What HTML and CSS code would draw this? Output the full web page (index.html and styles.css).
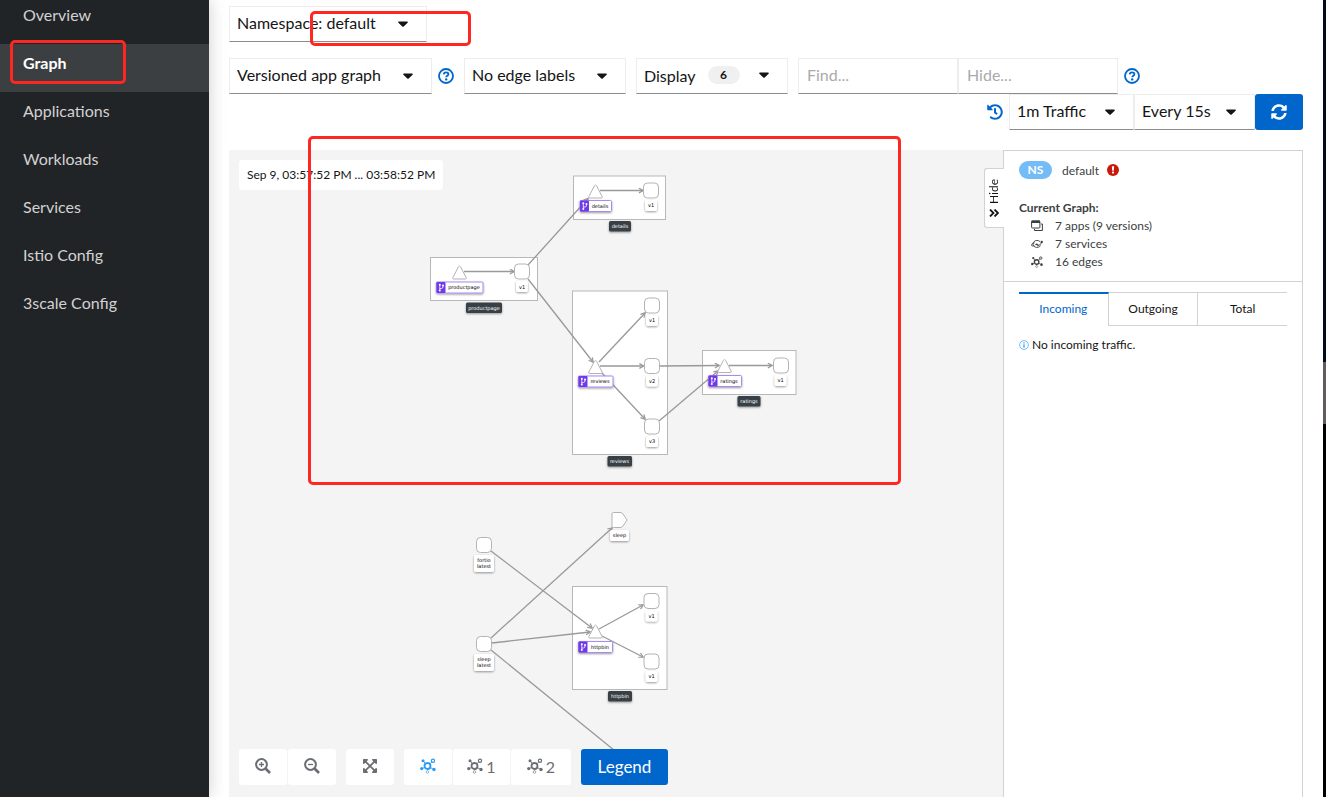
FILE: index.html
```html
<!DOCTYPE html>
<html lang="en">
  <head>
    <meta charset="UTF-8" />
    <meta name="viewport" content="width=device-width, initial-scale=1.0" />
    <link rel="stylesheet" href="styles.css" />
    <title>Kiali - Graph</title>
  </head>
  <body>
    <!-- shared icons -->
    <svg class="defs" width="0" height="0" aria-hidden="true">
      <symbol id="caret" viewBox="0 0 10 6">
        <path d="M1 .4h8c.8 0 1.2.9.6 1.4L5.7 5.500a1 1 0 0 1-1.400 0L.4 1.800C-.2 1.300 .2 .4 1 .4z" fill="currentColor" />
      </symbol>
      <symbol id="help" viewBox="0 0 16 16">
        <circle cx="8" cy="8" r="7" fill="none" stroke="currentColor" stroke-width="1.8" />
        <path d="M5.7 6.3c.2-1.4 1.1-2 2.3-2 1.4 0 2.4.8 2.4 1.9 0 1.5-2.2 1.5-2.2 3" fill="none" stroke="currentColor" stroke-width="1.8" />
        <circle cx="8.2" cy="11.4" r="1.2" fill="currentColor" />
      </symbol>
      <symbol id="topology" viewBox="0 0 16 16">
        <g fill="none" stroke="currentColor">
          <circle cx="7.5" cy="8" r="3" stroke-width="1.8" />
          <circle cx="13" cy="2.8" r="1.6" stroke-width="1.2" />
          <path d="M10 5.8l1.9-1.9M5.3 5.5L3.3 3M4.7 9.500l-2 .8M10.2 9.600l2.600 1.200" stroke-width="0.9" />
          <path d="M7.5 11v1.5" stroke-width="1" opacity="0.6" />
          <circle cx="7.5" cy="14" r="1.3" stroke-width="1" opacity="0.6" />
        </g>
        <circle cx="3" cy="2.7" r="1.5" fill="currentColor" />
        <circle cx="1.7" cy="10.6" r="1.6" fill="currentColor" />
        <circle cx="14" cy="11.5" r="1.7" fill="currentColor" />
      </symbol>
    </svg>

    <nav class="sidebar">
      <ul>
        <li><a href="#overview">Overview</a></li>
        <li><a href="#graph" class="current">Graph</a></li>
        <li><a href="#applications">Applications</a></li>
        <li><a href="#workloads">Workloads</a></li>
        <li><a href="#services">Services</a></li>
        <li><a href="#istio">Istio Config</a></li>
        <li><a href="#3scale">3scale Config</a></li>
      </ul>
    </nav>

    <main>
      <div class="toolbar">
        <div class="row">
          <div class="dropdown dropdown-ns">
            <select aria-label="Namespace">
              <option>Namespace: default</option>
            </select>
            <svg class="caret"><use href="#caret" /></svg>
          </div>
        </div>
        <div class="row row-filters">
          <div class="dropdown dropdown-type">
            <select aria-label="Graph type">
              <option>Versioned app graph</option>
            </select>
            <svg class="caret"><use href="#caret" /></svg>
          </div>
          <button class="help" aria-label="Graph type help"><svg><use href="#help" /></svg></button>
          <div class="dropdown dropdown-labels">
            <select aria-label="Edge labels">
              <option>No edge labels</option>
            </select>
            <svg class="caret"><use href="#caret" /></svg>
          </div>
          <button class="display">
            Display <span class="count">6</span>
            <svg class="caret"><use href="#caret" /></svg>
          </button>
          <div class="find">
            <input type="text" placeholder="Find..." aria-label="Find" />
            <input type="text" placeholder="Hide..." aria-label="Hide" />
          </div>
          <button class="help" aria-label="Find help"><svg><use href="#help" /></svg></button>
        </div>
        <div class="row row-refresh">
          <button class="help history" aria-label="Replay">
            <svg viewBox="0 0 512 512"><path fill="currentColor" d="M504 255.531c.253 136.640-111.180 248.372-247.820 248.468-59.015.042-113.223-20.530-155.822-54.911-11.077-8.940-11.905-25.541-1.839-35.607l11.267-11.267c8.609-8.609 22.353-9.551 31.891-1.984C173.062 425.135 212.781 440 256 440c101.705 0 184-82.311 184-184 0-101.705-82.311-184-184-184-48.814 0-93.149 18.969-126.068 49.932l50.754 50.754c10.080 10.080 2.941 27.314-11.313 27.314H24c-8.837 0-16-7.163-16-16V38.627c0-14.254 17.234-21.393 27.314-11.314l49.372 49.372C129.209 34.136 189.552 8 256 8c136.810 0 247.747 110.780 248 247.531zm-180.912 78.784l9.823-12.630c8.138-10.463 6.253-25.542-4.210-33.679L288 256.349V152c0-13.255-10.745-24-24-24h-16c-13.255 0-24 10.745-24 24v135.651l65.409 50.874c10.463 8.137 25.541 6.253 33.679-4.210z" /></svg>
          </button>
          <div class="dropdown dropdown-traffic">
            <select aria-label="Traffic duration">
              <option>1m Traffic</option>
            </select>
            <svg class="caret"><use href="#caret" /></svg>
          </div>
          <div class="dropdown dropdown-every">
            <select aria-label="Refresh interval">
              <option>Every 15s</option>
            </select>
            <svg class="caret"><use href="#caret" /></svg>
          </div>
          <button class="refresh" aria-label="Refresh">
            <svg viewBox="0 0 512 512"><path fill="currentColor" d="M370.720 133.280C339.458 104.008 298.888 87.962 255.848 88c-77.458.068-144.328 53.178-162.791 126.850-1.344 5.363-6.122 9.150-11.651 9.150H24.103c-7.498 0-13.194-6.807-11.807-14.176C33.933 94.924 134.813 8 256 8c66.448 0 126.791 26.136 171.315 68.685L463.030 40.970C478.149 25.851 504 36.559 504 57.941V192c0 13.255-10.745 24-24 24H345.941c-21.382 0-32.090-25.851-16.971-40.971l41.750-41.749zM32 296h134.059c21.382 0 32.090 25.851 16.971 40.971l-41.750 41.750c31.262 29.273 71.835 45.319 114.876 45.280 77.418-.070 144.315-53.144 162.787-126.849 1.344-5.363 6.122-9.150 11.651-9.150h57.304c7.498 0 13.194 6.807 11.807 14.176C478.067 417.076 377.187 504 256 504c-66.448 0-126.791-26.136-171.315-68.685L48.970 471.030C33.851 486.149 8 475.441 8 454.059V320c0-13.255 10.745-24 24-24z" /></svg>
          </button>
        </div>
      </div>

      <div class="graph">
        <section class="canvas">
          <svg class="nodes" role="img" aria-label="Service graph">
            <defs>
              <marker id="arrow" viewBox="0 0 8 8" refX="6.5" refY="4" markerWidth="6" markerHeight="6" markerUnits="userSpaceOnUse" orient="auto">
                <path d="M1 0.8L7 4L1 7.2" fill="none" stroke="#999" stroke-width="1.6" />
              </marker>
              <filter id="shadow" x="-20%" y="-20%" width="140%" height="170%">
                <feDropShadow dx="0" dy="1" stdDeviation="1" flood-opacity="0.4" />
              </filter>
              <rect id="app" x="-7.5" y="-7.5" width="15" height="15" rx="4" />
              <path id="svc" d="M-1.2 -6Q0 -8 1.2 -6L6.6 4.5Q7.2 6 6 6H-6Q-7.2 6 -6.6 4.5z" />
              <g id="fork">
                <rect width="9" height="11" rx="1" fill="#703be7" />
                <path d="M3.3 3v5M3.3 6.5h1.7q1.5 0 1.5-2V4" fill="none" stroke="#fff" stroke-width="0.8" />
                <circle cx="3.3" cy="2.8" r="1" fill="#fff" />
                <circle cx="3.3" cy="8.4" r="1" fill="#fff" />
                <circle cx="6.5" cy="3.6" r="1" fill="#fff" />
              </g>
            </defs>
            <g transform="translate(-229 -151)">
              <!-- app boxes -->
              <g class="box">
                <rect x="573.5" y="176" width="92" height="43.5" />
                <rect x="430.5" y="257.5" width="107" height="43" />
                <rect x="572.5" y="291" width="95" height="163.5" />
                <rect x="702.5" y="350.5" width="93.5" height="44" />
                <rect x="572.5" y="586.5" width="94.5" height="103" />
              </g>

              <g class="edge">
                <path d="M464 271.5H514" />
                <path d="M528 265L588 198.5" />
                <path d="M528 279L593 362" />
                <path d="M600 190.5H643" />
                <path d="M599 362L645 313" />
                <path d="M600 366H643.5" />
                <path d="M601 372L645 419" />
                <path d="M660 366L719 365.5" />
                <path d="M659 421L718 371" />
                <path d="M729 365.5H772" />
                <path d="M491 551L592 628" />
                <path d="M491 638L612 528" />
                <path d="M492 643L590 632" />
                <path d="M599 629L643 605" />
                <path d="M600 635L643 657" />
                <path d="M491 650L620 755" />
              </g>

              <g class="node">
                <use href="#svc" x="459.5" y="273" />
                <use href="#app" x="522" y="271.5" />
                <use href="#svc" x="595.5" y="192" />
                <use href="#app" x="651" y="190.5" />
                <use href="#svc" x="595.5" y="367.5" />
                <use href="#app" x="652" y="305.5" />
                <use href="#app" x="652" y="366" />
                <use href="#app" x="652" y="426.5" />
                <use href="#svc" x="724.5" y="366.5" />
                <use href="#app" x="781" y="365.5" />
                <use href="#app" x="484" y="545" />
                <use href="#app" x="484" y="644" />
                <path d="M613.5 512.5H620Q622 512.5 623 514L627 520L623 526Q622 527.5 620 527.5H613.5Q612 527.5 612 526V514Q612 512.5 613.5 512.5z" />
                <use href="#svc" x="595.5" y="632" />
                <use href="#app" x="651.5" y="601" />
                <use href="#app" x="651.5" y="661.5" />
              </g>

              <g class="tag">
                <rect x="516" y="281" width="12" height="11" rx="2" /><text x="522" y="288.5">v1</text>
                <rect x="645" y="200" width="12" height="11" rx="2" /><text x="651" y="207">v1</text>
                <rect x="646" y="315" width="12" height="11" rx="2" /><text x="652" y="322">v1</text>
                <rect x="646" y="375.5" width="12" height="11" rx="2" /><text x="652" y="382.5">v2</text>
                <rect x="646" y="436" width="12" height="11" rx="2" /><text x="652" y="443">v3</text>
                <rect x="774.5" y="375" width="12" height="11" rx="2" /><text x="780.5" y="382">v1</text>
                <rect x="645.5" y="610.5" width="12" height="11" rx="2" /><text x="651.5" y="617.5">v1</text>
                <rect x="645.5" y="671" width="12" height="11" rx="2" /><text x="651.5" y="678">v1</text>
                <rect x="610" y="530" width="19" height="11" rx="2" /><text x="619.5" y="537">sleep</text>
                <rect x="474" y="555" width="20" height="17" rx="2" /><text x="484" y="561.5">fortio</text><text x="484" y="567.5">latest</text>
                <rect x="474" y="654" width="20" height="17" rx="2" /><text x="484" y="660.5">sleep</text><text x="484" y="666.5">latest</text>
              </g>

              <g class="service">
                <rect x="436.5" y="282" width="46.5" height="11" rx="1" /><use href="#fork" x="436.5" y="282" /><text x="464" y="289">productpage</text>
                <rect x="580" y="200.5" width="31.5" height="11" rx="1" /><use href="#fork" x="580" y="200.5" /><text x="600" y="207.5">details</text>
                <rect x="578.5" y="376" width="34.5" height="11" rx="1" /><use href="#fork" x="578.5" y="376" /><text x="600" y="383">reviews</text>
                <rect x="708.5" y="375.5" width="33" height="11" rx="1" /><use href="#fork" x="708.5" y="375.5" /><text x="729" y="382.5">ratings</text>
                <rect x="578.5" y="641.5" width="34" height="11" rx="1" /><use href="#fork" x="578.5" y="641.5" /><text x="600" y="648.5">httpbin</text>
              </g>

              <g class="app-name">
                <rect x="466" y="302.5" width="36" height="10.5" rx="1.5" /><text x="484" y="309.5">productpage</text>
                <rect x="609" y="221" width="22" height="10.5" rx="1.5" /><text x="620" y="228">details</text>
                <rect x="607.5" y="456" width="24.5" height="10.5" rx="1.5" /><text x="619.5" y="463">reviews</text>
                <rect x="737.5" y="396" width="23" height="10.5" rx="1.5" /><text x="749" y="403">ratings</text>
                <rect x="608" y="691" width="24" height="10.5" rx="1.5" /><text x="620" y="697.5">httpbin</text>
              </g>
            </g>
          </svg>

          <div class="time-range">Sep 9, 03:57:52 PM ... 03:58:52 PM</div>

          <div class="canvas-tools">
            <div class="group">
              <button aria-label="Zoom in">
                <svg viewBox="0 0 16 16"><g fill="none" stroke="currentColor"><circle cx="6.5" cy="6.5" r="5.4" stroke-width="2" /><path d="M10.5 10.5L15 15" stroke-width="2.6" /><path d="M6.5 4v5M4 6.5h5" stroke-width="1.3" /></g></svg>
              </button>
              <button aria-label="Zoom out">
                <svg viewBox="0 0 16 16"><g fill="none" stroke="currentColor"><circle cx="6.5" cy="6.5" r="5.4" stroke-width="2" /><path d="M10.5 10.5L15 15" stroke-width="2.6" /><path d="M4 6.5h5" stroke-width="1.3" /></g></svg>
              </button>
            </div>
            <button aria-label="Fit to view">
              <svg viewBox="0 0 448 512"><path fill="currentColor" d="M448 344v112a23.940 23.940 0 0 1-24 24H312c-21.390 0-32.090-25.900-17-41l36.200-36.200L224 295.600 116.770 402.900 153 439c15.090 15.100 4.390 41-17 41H24a23.940 23.940 0 0 1-24-24V344c0-21.400 25.890-32.100 41-17l36.190 36.200L184.460 256 77.180 148.700 41 185c-15.100 15.100-41 4.400-41-17V56a23.940 23.940 0 0 1 24-24h112c21.390 0 32.090 25.900 17 41l-36.200 36.200L224 216.400l107.230-107.300L295 73c-15.090-15.100-4.390-41 17-41h112a23.940 23.940 0 0 1 24 24v112c0 21.400-25.890 32.100-41 17l-36.190-36.200L263.540 256l107.280 107.300L407 327.100c15.100-15.200 41-4.500 41 16.900z" /></svg>
            </button>
            <div class="group">
              <button class="active" aria-label="Default layout"><svg><use href="#topology" /></svg></button>
              <button class="layout-1"><svg><use href="#topology" /></svg>1</button>
              <button class="layout-2"><svg><use href="#topology" /></svg>2</button>
            </div>
            <button class="legend">Legend</button>
          </div>
        </section>

        <aside class="summary">
          <button class="hide-tab">
            <span>Hide</span>
            <svg viewBox="0 0 10 8"><path d="M1 .5L4.5 4L1 7.5M5.5 .5L9 4L5.5 7.5" fill="none" stroke="currentColor" stroke-width="1.8" /></svg>
          </button>
          <div class="summary-head">
            <div class="ns">
              <span class="ns-badge">NS</span>
              <span>default</span>
              <svg viewBox="0 0 12 12"><circle cx="6" cy="6" r="6" fill="#c9190b" /><path d="M4.9 2.3h2.2l-.3 4.4H5.2z" fill="#fff" /><circle cx="6" cy="8.6" r="1.1" fill="#fff" /></svg>
            </div>
            <h2>Current Graph:</h2>
            <ul>
              <li>
                <svg viewBox="0 0 12 12"><g fill="none" stroke="currentColor"><rect x="0.6" y="1" width="8.3" height="7" rx="0.8" /><path d="M10 4h1.4v6.5H3.5V9" /></g><path d="M.5 .5h8.5v2.5H.5z" fill="currentColor" /></svg>
                7 apps (9 versions)
              </li>
              <li>
                <svg viewBox="0 0 12 12"><g fill="none" stroke="currentColor" stroke-width="0.9"><path d="M9 3.6A4 3.5 0 1 0 9.6 7.5" /><path d="M3.6 8q-3.200 .4-3.200-.9Q.5 5.600 3.600 4.700M6 8q3.500-.5 4.600-3.400M4.300 6.500h3" /></g><circle cx="10.700" cy="4" r="1.200" fill="currentColor" /><circle cx="5.700" cy="6.300" r="0.900" fill="currentColor" /></svg>
                7 services
              </li>
              <li>
                <svg><use href="#topology" /></svg>
                16 edges
              </li>
            </ul>
          </div>
          <div class="tabs" role="tablist">
            <button role="tab" class="selected" aria-selected="true">Incoming</button>
            <button role="tab">Outgoing</button>
            <button role="tab">Total</button>
          </div>
          <p class="no-traffic">
            <svg viewBox="0 0 10 10"><circle cx="5" cy="5" r="4.4" fill="none" stroke="#73bcf7" stroke-width="1" /><path d="M5 4.2v3.5M5 2.3v1.2" stroke="#2b9af3" stroke-width="1.2" /></svg>
            No incoming traffic.
          </p>
        </aside>
      </div>
    </main>

    <div class="edge-strip"></div>

    <!-- highlights -->
    <div class="mark mark-nav"></div>
    <div class="mark mark-namespace"></div>
    <div class="mark mark-bookinfo"></div>
  </body>
</html>
```
FILE: styles.css
```css
* {
  margin: 0;
  padding: 0;
  box-sizing: border-box;
}

body {
  position: relative;
  display: flex;
  height: 100vh;
  overflow: hidden;
  background: #fff;
  color: #151515;
  font-family: Lato, sans-serif;
  font-size: 16px;
}

button,
input,
select {
  border: none;
  background: none;
  color: inherit;
  font: inherit;
}

ul {
  list-style: none;
}

.defs {
  position: absolute;
}

/* Sidebar */
.sidebar {
  flex: none;
  width: 209px;
  background: #212427;
  box-shadow: 0 0 16px rgba(0, 0, 0, 0.2);
}
.sidebar ul {
  margin-top: -4px;
}
.sidebar a {
  display: block;
  height: 48px;
  padding: 7px 23px;
  color: #d2d2d2;
  line-height: 24px;
  text-decoration: none;
}
.sidebar .current {
  background: #3c3f42;
  color: #fff;
  font-weight: 700;
}

main {
  flex: 1;
  min-width: 0;
  display: flex;
  flex-direction: column;
  padding: 6px 20px 0;
}

/* Toolbar */
.row {
  display: flex;
  align-items: center;
}
.row-filters {
  margin-top: 16px;
}
.row-refresh {
  justify-content: flex-end;
}

.dropdown {
  display: grid;
  align-items: center;
  height: 36px;
}
.dropdown select {
  grid-area: 1 / 1;
  width: 100%;
  height: 36px;
  padding: 0 7px 3px;
  appearance: none;
}
.dropdown .caret {
  grid-area: 1 / 1;
  justify-self: end;
  margin-right: 19px;
  pointer-events: none;
}
.caret {
  width: 10px;
  height: 6px;
}
.dropdown select,
.display,
.find input {
  border: 1px solid #ededed;
  border-bottom-color: #8a8d90;
}
.dropdown-ns {
  width: 198px;
}
.dropdown-type {
  width: 203px;
}
.dropdown-labels {
  width: 162px;
  margin-right: 10px;
}
.dropdown-traffic {
  width: 125px;
}
.dropdown-every {
  width: 121px;
}

.help {
  display: flex;
  padding: 0 10px 0 6px;
  color: #06c;
}
.history {
  padding-right: 6px;
}
.help svg {
  width: 16px;
  height: 16px;
}

.display {
  display: flex;
  align-items: center;
  width: 152px;
  height: 36px;
  padding: 0 18px 2px 7px;
}
.display .caret {
  margin-left: auto;
}
.count {
  width: 32px;
  margin-left: 12px;
  border-radius: 16px;
  background: #f0f0f0;
  font-size: 12px;
  font-weight: 700;
  line-height: 18px;
}

.find {
  display: flex;
  margin-left: 10px;
}
.find input {
  width: 160px;
  height: 36px;
  padding: 0 8px 3px;
}
.find input::placeholder {
  color: #aaa;
}

.refresh {
  display: flex;
  align-items: center;
  justify-content: center;
  width: 48px;
  height: 36px;
  border-radius: 3px;
  background: #06c;
  color: #fff;
}
.refresh svg {
  width: 16px;
  height: 16px;
}

/* Graph area */
.graph {
  flex: 1;
  min-height: 0;
  display: flex;
  margin-top: 20px;
}
.canvas {
  position: relative;
  flex: 1;
  display: flex;
  flex-direction: column;
  align-items: flex-start;
  justify-content: space-between;
  padding: 10px 10px 12px;
  background: #f4f4f4;
}
.nodes {
  position: absolute;
  top: 1px;
  left: 0;
  width: 100%;
  height: 100%;
}
.nodes text {
  font-family: "DejaVu Sans", sans-serif;
  font-size: 5px;
  text-anchor: middle;
}
.box rect {
  fill: #fff;
  stroke: #b8b8b8;
}
.edge path {
  fill: none;
  stroke: #999;
  stroke-width: 1.3;
  marker-end: url(#arrow);
}
.node {
  fill: #fff;
  stroke: #b3b3b3;
}
.tag rect {
  fill: #fff;
  filter: url(#shadow);
}
.service rect {
  fill: #fff;
  stroke: #a98af0;
  filter: url(#shadow);
}
.service use {
  stroke: none;
}
.app-name rect {
  fill: #393f44;
  filter: url(#shadow);
}
.app-name text {
  fill: #fff;
}

.time-range {
  position: relative;
  padding: 0 8px;
  border-radius: 3px;
  background: #fff;
  font-size: 12px;
  line-height: 30px;
}

.canvas-tools {
  position: relative;
  display: flex;
  gap: 10px;
}
.canvas-tools .group {
  display: flex;
  gap: 1px;
}
.canvas-tools button {
  display: flex;
  align-items: center;
  justify-content: center;
  gap: 3px;
  width: 48px;
  height: 36px;
  padding-bottom: 2px;
  border-radius: 3px;
  background: #fff;
  color: #6a6e73;
}
.canvas-tools svg {
  width: 16px;
  height: 16px;
}
.canvas-tools .active {
  color: #2b9af3;
}
.canvas-tools .layout-1 {
  width: 57px;
}
.canvas-tools .layout-2 {
  width: 60px;
}
.canvas-tools .legend {
  width: 87px;
  background: #06c;
  color: #fff;
  font-size: 17px;
}

/* Summary panel */
.summary {
  position: relative;
  flex: none;
  width: 300px;
  border: 1px solid #d2d2d2;
  border-bottom: none;
  font-size: 12px;
}
.hide-tab {
  position: absolute;
  top: 17px;
  right: 100%;
  display: flex;
  flex-direction: column;
  align-items: center;
  justify-content: center;
  gap: 4px;
  width: 20px;
  height: 60px;
  padding-right: 2px;
  border: 1px solid #d2d2d2;
  border-right: none;
  border-radius: 3px 0 0 3px;
  background: #fff;
}
.hide-tab span {
  writing-mode: vertical-rl;
  transform: rotate(180deg);
}
.hide-tab svg {
  width: 10px;
  height: 8px;
}
.summary-head {
  padding: 10px 15px;
  border-bottom: 1px solid #d2d2d2;
  color: #3c3f42;
}
.ns {
  display: flex;
  align-items: center;
}
.ns svg {
  width: 12px;
  height: 12px;
  margin-left: 8px;
}
.ns-badge {
  width: 33px;
  margin-right: 10px;
  border-radius: 16px;
  background: #73bcf7;
  color: #fff;
  font-weight: 700;
  line-height: 18px;
  text-align: center;
}
.summary h2 {
  margin-top: 20px;
  font-size: 12px;
  line-height: 18px;
}
.summary li {
  display: flex;
  align-items: center;
  gap: 12px;
  padding-left: 12px;
  line-height: 18px;
}
.summary li svg {
  width: 12px;
  height: 12px;
}

.tabs {
  display: flex;
  margin: 10px 15px 0;
}
.tabs button {
  flex: 1;
  height: 34px;
  padding-bottom: 2px;
  border: 1px solid #d2d2d2;
  border-left: none;
}
.tabs button:last-child {
  border-right: none;
}
.tabs .selected {
  padding-bottom: 4px;
  border-top: 2px solid #06c;
  border-bottom: none;
  color: #06c;
}
.no-traffic {
  display: flex;
  align-items: center;
  gap: 3px;
  margin: 10px 15px;
  line-height: 18px;
}
.no-traffic svg {
  width: 10px;
  height: 10px;
}

/* Window behind the page, on the right edge */
.edge-strip {
  flex: none;
  width: 3px;
  background: linear-gradient(#020b1c 0 362px, #635a60 362px 424px, #000 424px);
}

.mark {
  position: absolute;
  border: 3px solid #fe2722;
  border-radius: 5px;
  pointer-events: none;
}
.mark-nav {
  top: 40px;
  left: 10px;
  width: 116px;
  height: 44px;
}
.mark-namespace {
  top: 11px;
  left: 310px;
  width: 161px;
  height: 35px;
}
.mark-bookinfo {
  top: 136px;
  left: 308px;
  width: 593px;
  height: 349px;
}
```
